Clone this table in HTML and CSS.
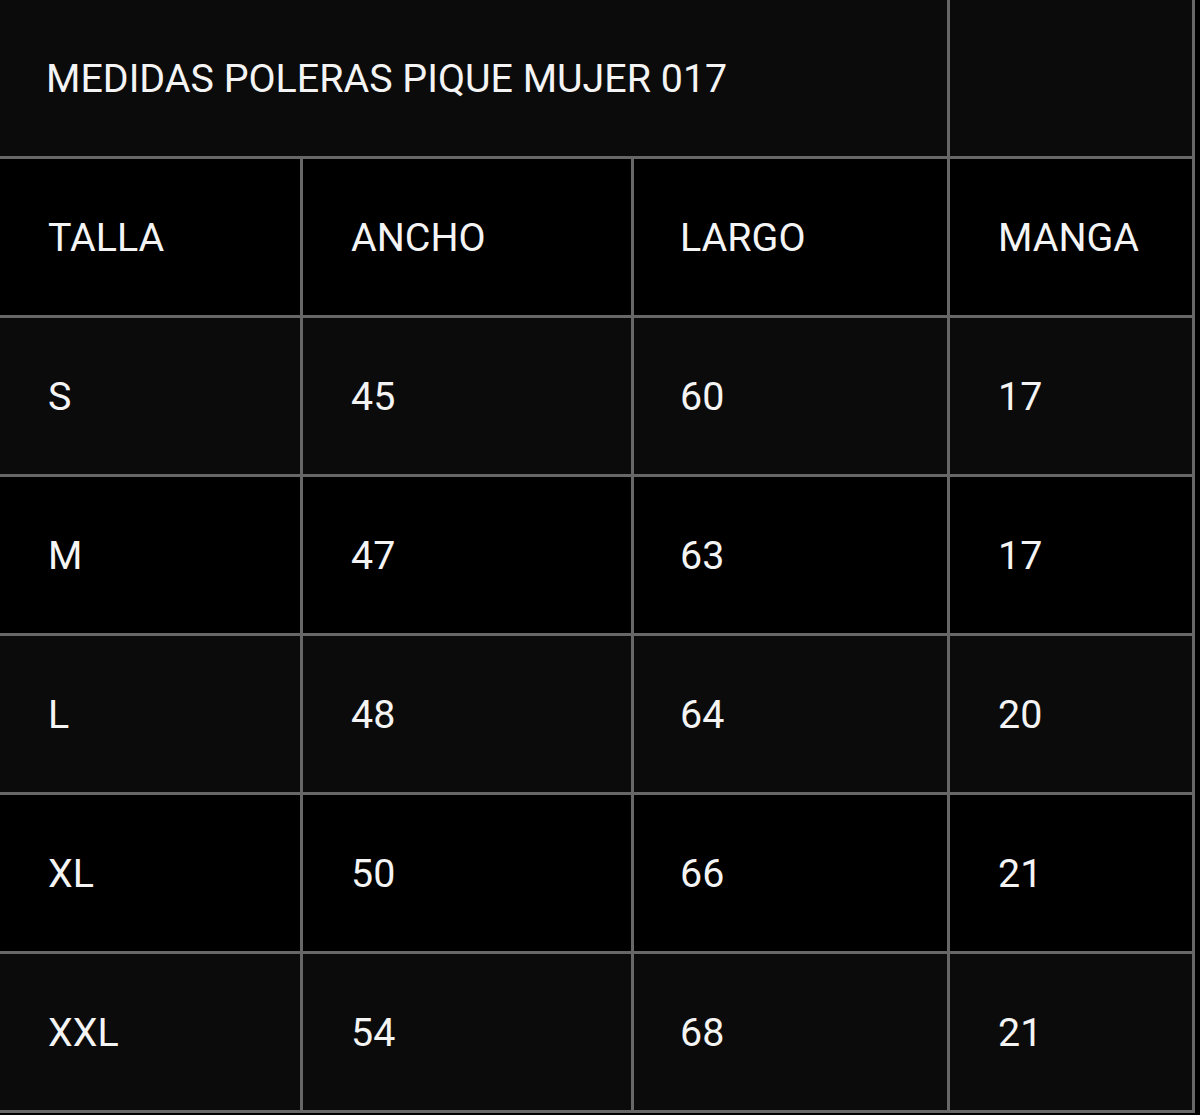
FILE: index.html
```html
<!DOCTYPE html>
<html lang="es">
<head>
<meta charset="utf-8">
<title>Medidas poleras pique mujer 017</title>
<link rel="stylesheet" href="styles.css">
</head>
<body>
<div class="chart">
  <div class="cell title odd span3">MEDIDAS POLERAS PIQUE MUJER 017</div>
  <div class="cell odd"></div>

  <div class="cell even">TALLA</div>
  <div class="cell even">ANCHO</div>
  <div class="cell even">LARGO</div>
  <div class="cell even">MANGA</div>

  <div class="cell odd">S</div>
  <div class="cell odd">45</div>
  <div class="cell odd">60</div>
  <div class="cell odd">17</div>

  <div class="cell even">M</div>
  <div class="cell even">47</div>
  <div class="cell even">63</div>
  <div class="cell even">17</div>

  <div class="cell odd">L</div>
  <div class="cell odd">48</div>
  <div class="cell odd">64</div>
  <div class="cell odd">20</div>

  <div class="cell even">XL</div>
  <div class="cell even">50</div>
  <div class="cell even">66</div>
  <div class="cell even">21</div>

  <div class="cell odd">XXL</div>
  <div class="cell odd">54</div>
  <div class="cell odd">68</div>
  <div class="cell odd">21</div>
</div>
</body>
</html>
```

FILE: styles.css
```css
html, body {
  margin: 0;
  padding: 0;
  background: #000;
}

body {
  font-family: Roboto, "Liberation Sans", sans-serif;
  color: #f4f4f4;
}

.chart {
  display: grid;
  grid-template-columns: 303px 331px 316px 245px;
  grid-auto-rows: 159px;
  width: 1195px;
}

.cell {
  box-sizing: border-box;
  border-right: 3px solid #676767;
  border-bottom: 3px solid #676767;
  display: flex;
  align-items: center;
  padding-left: 48px;
  font-size: 39.4px;
}

.cell:nth-child(4n+1) {
  padding-left: 46px;
}

.span3 {
  grid-column: span 3;
}

.odd {
  background: #0b0b0b;
}

.even {
  background: #000;
}
```
